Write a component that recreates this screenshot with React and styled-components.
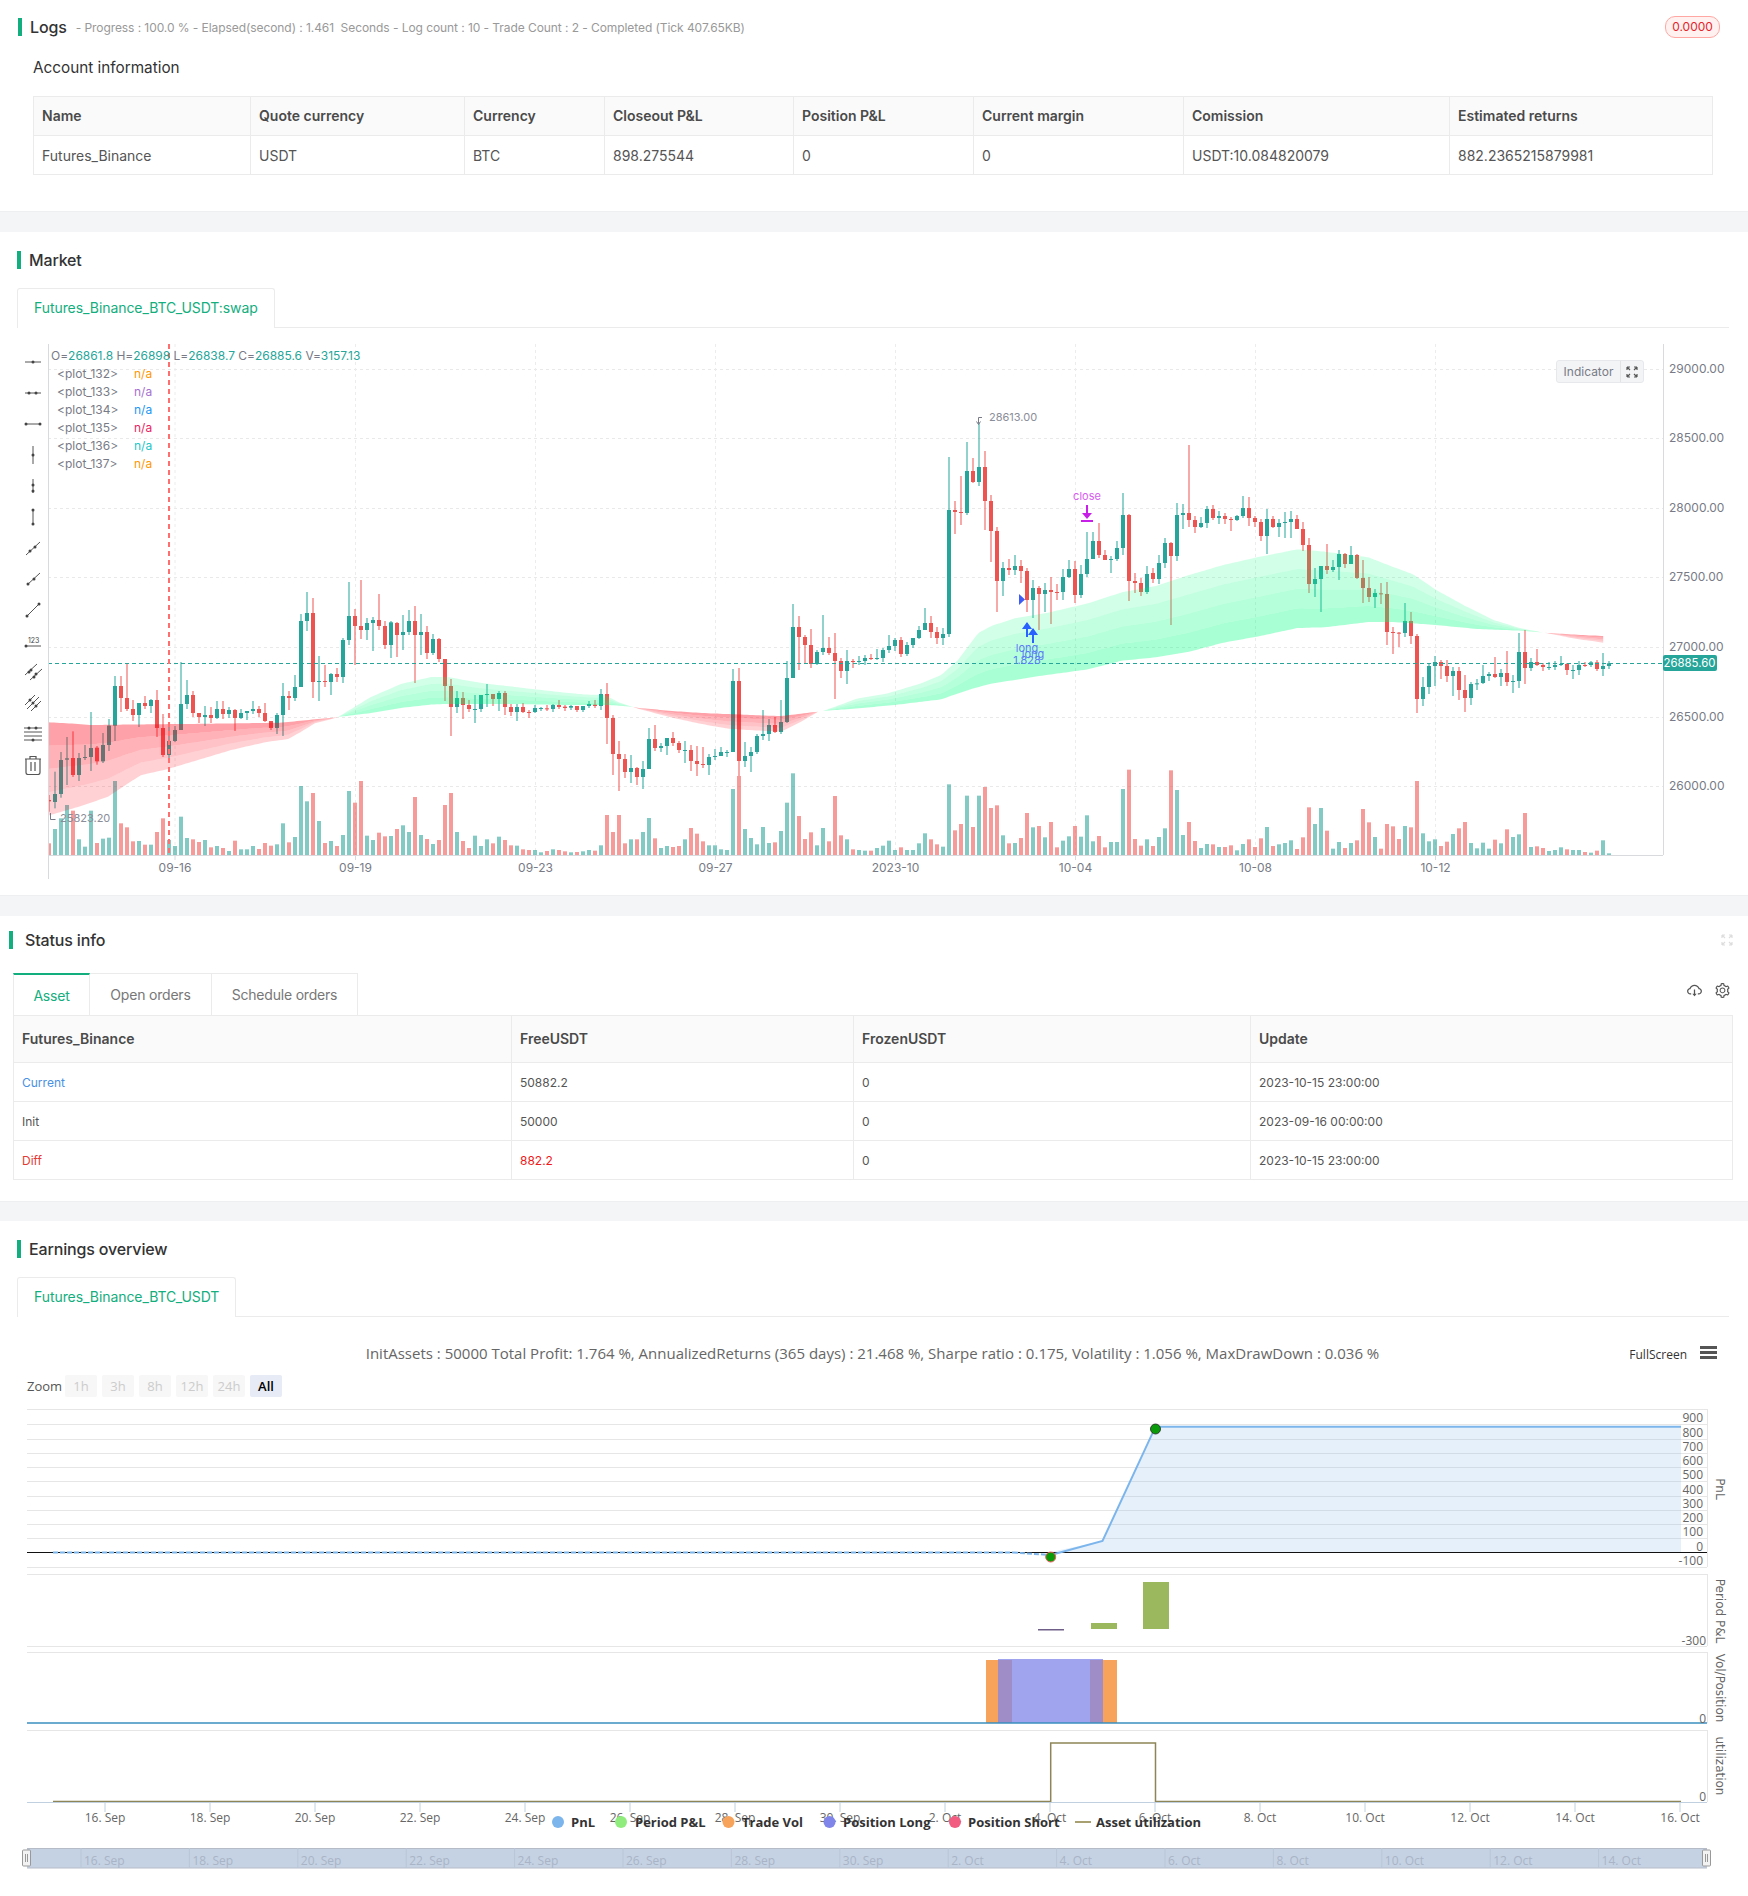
import React from 'react';
import styled, { createGlobalStyle } from 'styled-components';
import { AiOutlineCloudDownload, AiOutlineSetting } from 'react-icons/ai';

const colors = {
    green: '#26a69a',
    red: '#ef5350',
    accent: '#12ae7e',
    border: '#ebebeb',
    band: '#f4f5f7',
    axis: '#787b86',
};

const Global = createGlobalStyle`
    html, body { margin: 0; padding: 0; background: #fff; }
    #root { width: 1748px; height: 1896px; overflow: hidden; }
    * { box-sizing: border-box; }
    body { font-family: Inter, "Liberation Sans", sans-serif; color: #333; }
`;

const Section = styled.section`
    position: relative;
    height: ${(p) => p.$h}px;
    padding-top: ${(p) => p.$top}px;
    background: #fff;
`;

const Gap = styled.div`
    height: ${(p) => p.$h}px;
    background: ${colors.band};
    border-top: 1px solid #eeeff1;
`;

const Heading = styled.div`
    display: flex;
    align-items: center;
    height: 18px;
    margin-left: ${(p) => p.$left}px;
    padding-right: 28px;
`;

const Bar = styled.span`
    width: 4px;
    height: 18px;
    background: ${colors.accent};
    margin-right: ${(p) => p.$gap || 8}px;
`;

const Title = styled.h2`
    margin: 0;
    font-size: 16px;
    line-height: 18px;
    font-weight: 500;
    letter-spacing: -0.15px;
    color: #333;
`;

const Progress = styled.span`
    margin-left: 9px;
    font-size: 12px;
    letter-spacing: -0.07px;
    color: #999;
    white-space: pre;
`;

const Badge = styled.span`
    margin-left: auto;
    width: 55px;
    height: 22px;
    line-height: 20px;
    text-align: center;
    font-size: 12px;
    color: #e5242a;
    background: #fff1f0;
    border: 1px solid #ffa8a3;
    border-radius: 10px;
`;

const SubTitle = styled.h3`
    margin: 23px 0 19px 33px;
    font-size: 15.3px;
    line-height: 18px;
    font-weight: 400;
    color: #333;
`;

const Table = styled.table`
    table-layout: fixed;
    border-collapse: collapse;
    width: ${(p) => p.$w}px;
    margin-left: ${(p) => p.$left}px;
`;

const Th = styled.th`
    width: ${(p) => p.$w}px;
    height: ${(p) => p.$h}px;
    padding: 0 8px 1px;
    text-align: left;
    font-size: 14px;
    font-weight: 600;
    color: #4a4a4a;
    background: #fafafa;
    border: 1px solid ${colors.border};
`;

const Td = styled.td`
    height: ${(p) => p.$h}px;
    padding: 0 8px;
    font-size: ${(p) => p.$size}px;
    color: ${(p) => p.$color || '#555'};
    border: 1px solid ${colors.border};
`;

const TabBar = styled.div`
    display: flex;
    height: 40px;
    margin: 19px 19px 0 17px;
    border-bottom: 1px solid ${colors.border};
`;

const Tab = styled.div`
    height: 40px;
    padding: 0 16px;
    line-height: 38px;
    font-size: 14px;
    letter-spacing: -0.07px;
    color: ${colors.accent};
    background: #fff;
    border: 1px solid ${colors.border};
    border-bottom: 0;
    border-radius: 3px 3px 0 0;
`;

const ChartRow = styled.div`
    display: flex;
    position: relative;
    height: 555px;
    margin-top: 12px;
`;

const Toolbar = styled.div`
    flex: 0 0 48px;
    display: flex;
    flex-direction: column;
    align-items: center;
    padding: 6px 0 0 18px;
`;

const ToolItem = styled.div`
    flex: 0 0 31px;
    width: 30px;
    display: flex;
    align-items: center;
    justify-content: center;
`;

const Canvas = styled.svg`
    display: block;
    flex: 0 0 auto;
`;

const Ohlc = styled.div`
    position: absolute;
    left: 51px;
    top: 8px;
    font-size: 12px;
    line-height: 16px;
    letter-spacing: -0.02px;
    color: ${colors.axis};
    white-space: pre;
`;

const OhlcValue = styled.span`
    color: ${colors.green};
`;

const PlotList = styled.div`
    position: absolute;
    left: 57px;
    top: 25px;
    display: flex;
    flex-direction: column;
`;

const PlotRow = styled.div`
    display: flex;
    height: 18px;
    line-height: 18px;
    font-size: 12px;
    color: ${colors.axis};
`;

const PlotName = styled.span`
    width: 77px;
`;

const PlotValue = styled.span`
    color: ${(p) => p.$color};
`;

const IndicatorBox = styled.div`
    position: absolute;
    left: 1556px;
    top: 20px;
    width: 88px;
    height: 23px;
    display: flex;
    align-items: center;
    font-size: 12px;
    color: #787b86;
    background: #f3f4f6;
    border: 1px solid #e6e8eb;
    border-radius: 3px;
`;

const IndicatorLabel = styled.span`
    flex: 0 0 64px;
    text-align: center;
    border-right: 1px solid #e1e3e6;
    line-height: 21px;
`;

const IndicatorIcon = styled.span`
    flex: 1;
    display: flex;
    justify-content: center;
`;

const ExpandWrap = styled.span`
    margin-left: auto;
    margin-right: -13px;
    display: flex;
`;

const TabsRow = styled.div`
    display: flex;
    align-items: flex-start;
    height: 42px;
    margin: 24px 17px 0 13px;
`;

const StatusTab = styled.div`
    width: ${(p) => p.$w}px;
    height: 42px;
    line-height: 42px;
    text-align: center;
    font-size: 14px;
    letter-spacing: -0.2px;
    color: ${(p) => (p.$active ? colors.accent : '#777')};
    border: 1px solid ${colors.border};
    border-left-width: ${(p) => (p.$first ? 1 : 0)}px;
    border-bottom: 0;
    border-top: ${(p) => (p.$active ? `2px solid ${colors.accent}` : `1px solid ${colors.border}`)};
`;

const TabTools = styled.div`
    margin-left: auto;
    display: flex;
    gap: 11px;
    padding-top: 9px;
    color: #555;
    font-size: 17px;
`;

const StatsRow = styled.div`
    display: grid;
    grid-template-columns: 1fr auto 1fr;
    align-items: center;
    height: 30px;
    margin-top: 21px;
    padding: 0 31px 0 28px;
`;

const Stats = styled.div`
    grid-column: 2;
    font-family: "Open Sans", sans-serif;
    font-size: 15px;
    color: #666;
    white-space: nowrap;
`;

const FullScreen = styled.div`
    grid-column: 3;
    justify-self: end;
    display: flex;
    align-items: center;
    gap: 13px;
    margin-top: 3px;
    font-family: "Open Sans", sans-serif;
    font-size: 12px;
    color: #333;
`;

const Burger = styled.span`
    display: flex;
    flex-direction: column;
    justify-content: space-between;
    width: 17px;
    height: 13px;
    margin-top: -4px;
`;

const BurgerLine = styled.i`
    display: block;
    height: 3px;
    background: #555;
`;

const ZoomRow = styled.div`
    display: flex;
    align-items: center;
    gap: 5px;
    height: 22px;
    margin: 7px 0 3px;
    padding-left: 27px;
    font-family: "Open Sans", sans-serif;
    font-size: 13px;
`;

const ZoomLabel = styled.span`
    width: 33px;
    color: #555;
`;

const ZoomButton = styled.span`
    width: 32px;
    height: 22px;
    line-height: 22px;
    text-align: center;
    border-radius: 2px;
    background: ${(p) => (p.$active ? '#e6ebf5' : '#f7f7f7')};
    color: ${(p) => (p.$active ? '#000' : '#ccc')};
    font-weight: ${(p) => (p.$active ? 600 : 400)};
`;

const AxisText = styled.text`
    font-family: Inter, sans-serif;
    font-size: 12px;
    fill: ${colors.axis};
`;

const PriceTag = styled.text`
    font-family: Inter, sans-serif;
    font-size: 11.4px;
    fill: #fff;
    text-anchor: middle;
`;

const NoteText = styled.text`
    font-family: Inter, sans-serif;
    font-size: 11px;
    fill: ${(p) => p.$color};
    text-anchor: ${(p) => p.$anchor || 'start'};
`;

const HcText = styled.text`
    font-family: "Open Sans", sans-serif;
    font-size: 12px;
    fill: #666;
    text-anchor: ${(p) => p.$anchor || 'middle'};
`;

const HcTitle = styled.text`
    font-family: "DejaVu Sans", sans-serif;
    font-size: 12px;
    fill: #666;
    text-anchor: middle;
`;

const LegendText = styled.text`
    font-family: "Open Sans", sans-serif;
    font-size: 13px;
    font-weight: 700;
    fill: #333;
`;

const NavText = styled.text`
    font-family: "Open Sans", sans-serif;
    font-size: 12px;
    fill: #a9b4c6;
`;

// candles read off the chart: colour + high, body top, body bottom, low, volume top
const candleRows = [
    [560, `r705,720,724,755,850 g635,702,726,745,807 g576,600,702,713,775 g531,595,599,675,735 r514,594,645,651,752 g579,594,645,663,838 g555,591,594,600,860 g456,564,591,633,752 r558,563,604,614,849 g519,555,604,609,836 g477,497,555,573,833 g348,378,497,543,663 r348,378,414,456,790 r312,414,447,453,802 r420,447,465,483,844 g429,429,465,501,843 r408,429,438,447,854 g417,420,438,459,854 r390,420,504,531,816 r462,504,585,591,775 g498,543,585,597,840 g498,510,543,546,858 g306,432,510,510,770 g360,405,432,447,834 r393,405,459,471,838 r459,459,471,489,846 g438,465,471,498,840 r441,465,474,489,862 g423,447,474,477,858 r423,447,462,477,864 g441,450,462,474,873 r447,450,474,513,842 g447,459,474,477,868 g453,453,459,480,868 g423,447,453,462,858 r438,447,459,471,867 r429,459,483,486,849 r483,483,504,510,857 g459,465,504,522,853 g369,408,465,528,790 r393,408,414,450,847 g345,381,414,423,831 g162,183,381,381,678 g96,159,183,213,724 r114,159,366,414,699 g288,363,366,423,783 r315,363,366,381,849 g339,342,366,405,843 r324,342,351,366,858 g234,240,351,369,825 g66,168,240,255,693 r147,168,198,315,728 r60,198,210,237,663 g174,189,210,240,827 g171,180,189,273,840 r102,180,198,210,818 r183,198,255,267,829 g183,187,255,294,828 r186,189,225,291,807 g165,216,225,270,796 g150,183,216,225,816 r138,183,225,369,711 g162,216,225,285,825 r198,216,279,297,837 g222,237,279,285,852 r234,237,297,306,840 r297,297,378,423,735 r357,378,441,528,699 g393,414,441,459,816 r396,414,435,477,843 r420,435,447,456,864 g405,447,450,489,827 g405,405,447,456,858 g372,402,405,441,838 r402,402,417,438,850 g393,399,417,453,830 r393,399,441,465,840 r432,441,456,468,856 g432,441,456,483,857 r429,441,456,459,868 r450,456,459,474,870 g435,444,456,459,870 g441,444,447,453,877 r435,445,447,453,873 g432,435,447,456,868 r420,435,441,447,870 r435,440,444,453,874`],
    [420, `g855,858,863,870,1297 r858,858,870,876,1296 g858,858,870,876,1294 g843,852,858,864,1290 r840,854,858,864,1292 g807,822,858,870,1276 r789,822,894,972,1185 r885,894,1002,1065,1236 r963,1002,1017,1113,1185 r1002,1017,1056,1074,1270 g1005,1044,1056,1089,1258 r1041,1044,1071,1095,1258 g1023,1047,1071,1107,1236 g924,957,1047,1047,1194 r915,957,984,993,1255 g969,978,984,996,1284 g954,954,978,1005,1278 r936,954,969,978,1281 r963,969,990,999,1278 g963,990,993,1029,1258 r975,990,1023,1053,1224 r978,1023,1032,1068,1241 r981,1032,1035,1044,1264 g1002,1011,1035,1065,1276 g987,1008,1011,1020,1276 g981,996,1008,1008,1288 g990,996,997,1011,1290 g747,783,996,996,1107 r744,783,1023,1068,1068 g966,1008,1023,1041,1227 g981,996,1008,1056,1254 g942,948,996,1002,1273 g870,942,948,960,1221 g897,915,942,963,1269 r891,915,936,939,1267 g840,906,936,942,1233 g723,774,906,909,1148 g552,621,774,774,1060 r588,621,651,750,1188 r645,651,675,732,1257 r627,675,732,744,1237 g690,696,732,735,1276 g585,684,696,705,1224 r651,684,699,705,1264 r639,699,723,837,1128 r714,723,753,774,1246 g690,723,753,792,1258 r717,723,726,744,1288 g708,723,726,735,1290 g705,714,723,735,1292 r702,714,717,720,1292 g687,714,716,720,1284 g684,690,714,726,1277 g645,678,690,699,1262 g654,660,678,693,1290 r651,660,702,711,1282 g666,675,702,708,1290 g654,654,675,684,1290 g618,630,654,657,1270 g564,609,630,630,1240 r588,609,636,654,1258 r621,636,654,672,1273 g624,642,654,675,1280 g111,270,642,651,1093 r243,270,276,342,1231 r168,276,279,315,1212 g66,153,279,285,1127 r114,153,186,189,1221 g8,141,186,198,1127 r93,141,243,330,1101 r225,243,333,426,1164 r321,333,483,576,1156 g426,444,483,528,1246 r417,444,450,465,1270 g405,438,450,465,1269 r420,438,453,489,1254 r444,453,540,576,1179 g480,504,540,594,1222 r498,504,522,630,1218 g489,510,522,576,1252 r471,510,516,612,1206 r492,516,519,540,1282 g447,471,516,540,1262 g420,447,471,474,1249 r423,447,525,549,1218 g435,462,525,534,1250 g336,417,462,471,1186`],
    [420, `g336,363,417,417,1264 r309,363,405,414,1248 r390,405,420,420,1282 g408,417,419,459,1266 g363,384,417,423,1266 g219,285,384,405,1107 r282,285,483,543,1049 r459,483,489,519,1257 r474,489,516,528,1277 g438,462,516,522,1258 r444,459,477,489,1278 g405,429,477,492,1251 g354,369,429,444,1225 r366,369,408,615,1051 g249,285,408,423,1110 g252,279,285,327,1245 r75,279,300,321,1206 r288,300,321,339,1263 g291,309,321,324,1284 g258,267,309,324,1272 r255,267,294,300,1273 g273,288,294,312,1281 r279,288,297,312,1281 r291,297,299,333,1276 g285,288,300,303,1291 g228,264,288,294,1272 r231,264,294,318,1258 r288,294,306,321,1281 r297,306,348,363,1255 g267,297,348,402,1221 r288,297,321,324,1278 g297,309,321,351,1273 g276,306,308,354,1269 g273,297,306,354,1261 r285,297,327,327,1287 r306,327,375,393,1252 r354,375,492,519,1162 g444,477,492,531,1212 g438,438,477,576,1164 r372,438,450,462,1232 g420,441,450,456,1286 g390,402,441,480,1266 r399,402,432,444,1284 g378,405,432,432,1269 r402,405,474,477,1261 r420,474,504,549,1167 r471,504,531,546,1207 g507,519,531,564,1251 r489,520,522,552,1286 r486,522,636,675,1212 r621,636,638,702,1219 r636,638,640,681,1257 g549,603,639,651,1218 r576,603,648,672,1222 r642,648,837,879,1083 g771,801,837,858,1240 g732,738,801,822,1264 g708,726,738,798,1258 r720,726,738,777,1278 r720,738,768,786,1265 g741,753,768,828,1242 r741,753,810,840,1225 r765,810,834,876,1206 g786,792,834,855,1269 g777,790,792,810,1285 g735,768,789,792,1268 g756,762,768,783,1286 r711,762,771,774,1259 g747,759,771,798,1270 r693,759,786,798,1228 g765,783,785,819,1251 g639,696,783,804,1243 r630,696,744,792,1179 g714,726,744,753,1281 r687,726,735,738,1279 r729,735,741,753,1284 g726,741,743,750,1293 g723,735,741,750,1290 g708,732,735,738,1282 r729,732,750,765,1288 g735,750,752,777,1290 g723,735,750,765,1290 r726,735,738,741,1296 g723,727,735,741,1298 r720,727,747,753,1292 g699,738,747,768,1261 g723,730,738,747,1300`],
];

const candles = candleRows.flatMap(([y0, text]) =>
    text.split(' ').map((item) => {
        const [high, top, bottom, low, vol] = item.slice(1).split(',').map((n) => y0 + Number(n) / 3);
        return { up: item[0] === 'g', high, top, bottom, low, vol };
    })
);

const fromCrop = (x0, y0, sx, pts) => pts.map(([x, y]) => [x0 + x / sx, y0 + y / 3]);

const interp = (edge, x) => {
    for (let i = 1; i < edge.length; i++) {
        if (x <= edge[i][0]) {
            const [x1, y1] = edge[i - 1];
            const [x2, y2] = edge[i];
            return y1 + ((y2 - y1) * (x - x1)) / (x2 - x1 || 1);
        }
    }
    return edge[edge.length - 1][1];
};

const greenFill = ['rgba(0,255,128,.18)', 'rgba(0,255,128,.24)', 'rgba(0,255,128,.29)', 'rgba(0,255,128,.34)'];
const redFill = ['rgba(255,0,20,.37)', 'rgba(255,0,20,.3)', 'rgba(255,0,20,.24)', 'rgba(255,0,20,.18)'];
const steps = [0, 0.25, 0.5, 0.75, 1];

const ribbons = [
    {
        fills: redFill,
        top: fromCrop(48, 560, 3, [[0, 487], [60, 490], [130, 495], [300, 493], [500, 491], [700, 488], [800, 478], [870, 472]]),
        bottom: fromCrop(48, 560, 3, [[0, 767], [100, 738], [180, 710], [240, 670], [280, 645], [360, 627], [450, 600], [550, 570], [650, 547], [720, 537], [760, 515], [800, 490], [870, 472]]),
    },
    {
        fills: greenFill,
        top: [[338, 717], [371, 697], [401, 684], [431, 677], [448, 677], [481, 683], [515, 687], [568, 693], [588, 694.7], [605, 695], [618, 702], [633, 707]],
        bottom: [[338, 717], [371, 713], [401, 708], [431, 704.5], [448, 704], [481, 704], [515, 704], [568, 705], [588, 705], [605, 705], [618, 705.5], [633, 707]],
    },
    {
        fills: redFill,
        top: fromCrop(568, 420, 3, [[195, 862], [300, 872], [400, 879], [500, 883], [600, 887], [640, 888], [750, 875]]),
        bottom: fromCrop(568, 420, 3, [[195, 862], [300, 890], [400, 912], [480, 926], [560, 931], [640, 935], [700, 905], [750, 875]]),
    },
    {
        fills: greenFill,
        top: [
            ...fromCrop(568, 420, 3, [[765, 873], [870, 835], [960, 820], [1060, 790], [1120, 765], [1170, 720], [1230, 640], [1270, 618], [1340, 595], [1440, 578]]),
            ...fromCrop(1088, 420, 2.958, [[0, 550], [30, 540], [100, 517], [200, 498], [300, 465], [400, 435], [500, 412], [620, 388], [700, 395], [830, 412], [900, 440], [960, 462], [1030, 510], [1110, 555], [1200, 600], [1280, 625], [1350, 638]]),
        ],
        bottom: [
            ...fromCrop(568, 420, 3, [[765, 873], [870, 865], [980, 855], [1120, 838], [1200, 810], [1265, 792], [1400, 770]]),
            ...fromCrop(1088, 420, 2.958, [[0, 748], [100, 722], [200, 712], [300, 695], [400, 668], [500, 650], [620, 624], [700, 622], [830, 606], [900, 606], [960, 610], [1030, 615], [1150, 627], [1280, 632], [1350, 638]]),
        ],
    },
    {
        fills: redFill,
        top: fromCrop(1088, 420, 2.958, [[1350, 638], [1440, 644], [1524, 648]]),
        bottom: fromCrop(1088, 420, 2.958, [[1350, 638], [1440, 656], [1524, 668]]),
    },
];

const ribbonLayers = (ribbon) => {
    const start = ribbon.top[0][0];
    const end = ribbon.top[ribbon.top.length - 1][0];
    const xs = [];
    for (let x = start; x < end; x += 3) xs.push(x);
    xs.push(end);
    const lineAt = (f) => xs.map((x) => [x, interp(ribbon.top, x) * (1 - f) + interp(ribbon.bottom, x) * f]);
    return ribbon.fills.map((fill, i) => {
        const upper = lineAt(steps[i]);
        const lower = lineAt(steps[i + 1]).reverse();
        return { fill, points: [...upper, ...lower].map(([x, y]) => `${x.toFixed(1)},${y.toFixed(1)}`).join(' ') };
    });
};

const priceTicks = [
    ['29000.00', 369], ['28500.00', 438], ['28000.00', 508], ['27500.00', 577],
    ['27000.00', 647], ['26500.00', 717], ['26000.00', 786],
];
const timeTicks = [
    ['09-16', 175], ['09-19', 355.5], ['09-23', 535.5], ['09-27', 715.5],
    ['2023-10', 895.5], ['10-04', 1075.5], ['10-08', 1255.5], ['10-12', 1435.5],
];

const MarketChart = () => (
    <Canvas width="1700" height="555" viewBox="48 340 1700 555">
        {priceTicks.map(([label, y]) => (
            <line key={label} x1="48" x2="1663" y1={y + 0.5} y2={y + 0.5} stroke="#e9e9e9" strokeDasharray="3 3" />
        ))}
        {timeTicks.map(([label, x]) => (
            <line key={label} x1={x} x2={x} y1="344" y2="855" stroke="#ececec" strokeDasharray="3 3" />
        ))}
        {candles.map((c, i) => {
            const x = 49 + 6 * i;
            return (
                <rect key={i} x={x - 2} y={c.vol} width="4" height={855 - c.vol} fill={c.up ? colors.green : colors.red} opacity="0.58" />
            );
        })}
        {candles.map((c, i) => {
            const x = 49 + 6 * i;
            const fill = c.up ? colors.green : colors.red;
            return (
                <g key={i} fill={fill}>
                    <rect x={x - 1} y={c.high} width="2" height={c.low - c.high} opacity="0.5" />
                    <rect x={x - 2} y={c.top} width="4" height={Math.max(c.bottom - c.top, 1)} />
                </g>
            );
        })}
        {ribbons.flatMap((ribbon, r) =>
            ribbonLayers(ribbon).map((layer, i) => <polygon key={`${r}-${i}`} points={layer.points} fill={layer.fill} />)
        )}
        <line x1="48" x2="1663" y1="663.5" y2="663.5" stroke={colors.green} strokeDasharray="4 3" />
        <line x1="169" x2="169" y1="344" y2="855" stroke="#ff6f6f" strokeWidth="2" strokeDasharray="5 4" />
        <line x1="48.5" x2="48.5" y1="344" y2="879" stroke="#d8dade" />
        <line x1="1663.5" x2="1663.5" y1="344" y2="855" stroke="#d8dade" />
        <line x1="48" x2="1663" y1="855.5" y2="855.5" stroke="#d8dade" />
        {timeTicks.map(([label, x]) => (
            <g key={label}>
                <line x1={x} x2={x} y1="855" y2="860" stroke="#d8dade" />
                <AxisText x={x} y="872" textAnchor="middle">{label}</AxisText>
            </g>
        ))}
        {priceTicks.map(([label, y]) => (
            <AxisText key={label} x="1669" y={y + 4}>{label}</AxisText>
        ))}
        <rect x="1663" y="655" width="54" height="16" rx="2" fill={colors.green} />
        <PriceTag x="1689.5" y="667">26885.60</PriceTag>

        <path d="M982 417.5h-3.5v6M976.5 421.5l2 3 2-3" fill="none" stroke="#787b86" />
        <NoteText x="989" y="421" $color="#8a8e99">28613.00</NoteText>
        <path d="M50.5 813v6.5h5" fill="none" stroke="#787b86" />
        <NoteText x="60" y="822" $color="#8a8e99">25823.20</NoteText>

        <NoteText x="1087" y="500" $color="#d65cf0" $anchor="middle">close</NoteText>
        <path d="M1087 505v12" stroke="#c81fe8" strokeWidth="2" />
        <path d="M1082 513l5 6 5-6z" fill="#c81fe8" />
        <rect x="1081" y="520" width="12" height="2" fill="#c81fe8" />

        <path d="M1019 594l6 5.5-6 5.5z" fill="#3d5cf5" />
        <path d="M1027 623v14" stroke="#2962ff" strokeWidth="2" />
        <path d="M1022 629l5-7 5 7z" fill="#2962ff" />
        <path d="M1033 629v14" stroke="#2962ff" strokeWidth="2" />
        <path d="M1028 635l5-7 5 7z" fill="#2962ff" />
        <NoteText x="1027" y="652" $color="#5b7cf5" $anchor="middle">long</NoteText>
        <NoteText x="1033" y="658" $color="#5b7cf5" $anchor="middle">long</NoteText>
        <NoteText x="1027" y="664" $color="#5b7cf5" $anchor="middle">1.828</NoteText>
    </Canvas>
);

const Dot = ({ x, y }) => <circle cx={x} cy={y} r="1.5" fill="#444" stroke="none" />;

const toolIcons = [
    <><path d="M1 9h16" /><Dot x={9} y={9} /></>,
    <><path d="M1 9h16" /><Dot x={5} y={9} /><Dot x={12} y={9} /></>,
    <><path d="M2 9h14" /><Dot x={2} y={9} /><Dot x={16} y={9} /></>,
    <><path d="M9 0v18" /><Dot x={9} y={9} /></>,
    <><path d="M9 2v14" /><Dot x={9} y={8} /><Dot x={9} y={14} /></>,
    <><path d="M9 2v14" /><Dot x={9} y={2} /><Dot x={9} y={16} /></>,
    <><path d="M2 16L16 3" /><Dot x={6} y={12} /><Dot x={11} y={8} /></>,
    <><path d="M3 15L16 3" /><Dot x={4} y={14} /><Dot x={10} y={9} /></>,
    <><path d="M3 15L15 3" /><Dot x={3} y={15} /><Dot x={15} y={3} /></>,
    <><path d="M2 14h15" /><Dot x={2} y={14} /><text x="4" y="11" fontSize="7" stroke="none" fill="#444" fontFamily="Inter">123</text></>,
    <><path d="M1 12L13 1M6 17L18 6" /><Dot x={7} y={7} /><Dot x={12} y={11} /><Dot x={5} y={9} /><Dot x={10} y={14} /></>,
    <><path d="M1 11L11 1M3 15L15 3M7 17L17 7" /><Dot x={6} y={6} /><Dot x={9} y={9} /><Dot x={12} y={12} /></>,
    <><path d="M0 3h18M0 7h18M0 11h18M0 15h18" /><Dot x={5} y={3} /><Dot x={12} y={3} /><Dot x={9} y={15} /></>,
    <><path d="M1 3h16M6 3V0.5h6V3M2 3v13.5a2 2 0 0 0 2 2h10a2 2 0 0 0 2-2V3M7 6v9M11 6v9" strokeWidth="1.2" /></>,
];

const ExpandIcon = ({ color }) => (
    <svg width="12" height="12" viewBox="0 0 12 12" fill="none" stroke={color} strokeWidth="1.2">
        <path d="M1 1l3 3M1 1v3M1 1h3M11 1L8 4M11 1v3M11 1H8M1 11l3-3M1 11V8M1 11h3M11 11L8 8M11 11V8M11 11H8" />
    </svg>
);

const plots = [
    ['132', '#ff9800'], ['133', '#a66fd0'], ['134', '#2196f3'],
    ['135', '#e91e63'], ['136', '#26c6c6'], ['137', '#ff9800'],
];

const days = ['16. Sep', '18. Sep', '20. Sep', '22. Sep', '24. Sep', '26. Sep', '28. Sep', '30. Sep', '2. Oct', '4. Oct', '6. Oct', '8. Oct', '10. Oct', '12. Oct', '14. Oct', '16. Oct'];
const pnlTicks = [
    ['900', 1409, 1422], ['800', 1424, 1437], ['700', 1439, 1451], ['600', 1453, 1465], ['500', 1467, 1479],
    ['400', 1481, 1494], ['300', 1496, 1508], ['200', 1510, 1522], ['100', 1524, 1536], ['0', 1538, 1551], ['-100', 1567, 1565],
];

const legendItems = [
    ['PnL', 558, 571, '#7cb5ec'], ['Period P&L', 621, 635, '#90ed7d'], ['Trade Vol', 728.5, 742, '#f7a35c'],
    ['Position Long', 829.5, 843, '#8085e9'], ['Position Short', 955, 968, '#f15c80'],
];

const hline = (y, x1 = 27, x2 = 1707, stroke = '#e6e6e6') => (
    <line key={`${y}-${x1}`} x1={x1} x2={x2} y1={y + 0.5} y2={y + 0.5} stroke={stroke} />
);

const EarningsChart = () => (
    <Canvas width="1748" height="496" viewBox="0 1400 1748 496">
        {pnlTicks.map(([, y]) => hline(y))}
        {[1574, 1646, 1652, 1730].map((y) => hline(y))}
        {[[1409, 1567], [1574, 1646], [1652, 1723], [1730, 1802]].map(([a, b]) => (
            <line key={a} x1="1707.5" x2="1707.5" y1={a} y2={b} stroke="#e6e6e6" />
        ))}

        <polygon points="1050.7,1552 1102.5,1541 1155.5,1426.7 1681,1426.7 1681,1552" fill="rgba(124,181,236,.2)" />
        <line x1="27" x2="1707" y1="1552.5" y2="1552.5" stroke="#111" strokeWidth="1.2" />
        <line x1="53" x2="1013" y1="1552.5" y2="1552.5" stroke="#7cb5ec" strokeWidth="2" strokeDasharray="5 2" />
        <path d="M1013 1552.5L1050.7 1555" fill="none" stroke="#7cb5ec" strokeWidth="2" strokeDasharray="5 2" />
        <path d="M1050.7 1555L1102.5 1541L1155.5 1426.7H1681" fill="none" stroke="#7cb5ec" strokeWidth="2" />
        <circle cx="1050.7" cy="1557" r="5" fill="#0a9b0a" stroke="#f15c5c" />
        <circle cx="1155.5" cy="1429" r="5" fill="#0a9b0a" stroke="#222" strokeWidth="0.8" />
        {pnlTicks.map(([label, , y]) => (
            <HcText key={label} x="1703" y={y} $anchor="end">{label}</HcText>
        ))}

        <rect x="1091" y="1623" width="26" height="6" fill="#9bb85f" />
        <rect x="1143" y="1582" width="26" height="47" fill="#9bb85f" />
        <rect x="1038" y="1629" width="26" height="1.5" fill="#6f5e88" />
        <HcText x="1706" y="1645" $anchor="end">-300</HcText>

        <rect x="986" y="1660" width="26" height="63" fill="#f7a35c" />
        <rect x="1090" y="1660" width="27" height="63" fill="#f7a35c" />
        <rect x="998" y="1659" width="105" height="64" fill="rgba(128,133,233,.75)" />
        <line x1="27" x2="1707" y1="1723" y2="1723" stroke="#3a8fbf" strokeWidth="1.5" />
        <HcText x="1706" y="1723" $anchor="end">0</HcText>

        <path d="M53 1801.5H1050.7V1743H1155.5V1801.5H1681" fill="none" stroke="#8d8557" strokeWidth="1.5" />
        <HcText x="1706" y="1801" $anchor="end">0</HcText>

        <line x1="27" x2="1707" y1="1802.5" y2="1802.5" stroke="#c0d0e0" />
        {days.map((label, i) => {
            const x = 105 + 105 * i;
            return (
                <g key={label}>
                    <line x1={x} x2={x} y1="1802" y2="1812" stroke="#c0d0e0" />
                    <HcText x={x} y="1822">{label}</HcText>
                </g>
            );
        })}

        <HcTitle transform="rotate(90 1716 1489)" x="1716" y="1489">PnL</HcTitle>
        <HcTitle transform="rotate(90 1716 1611)" x="1716" y="1611">Period P&amp;L</HcTitle>
        <HcTitle transform="rotate(90 1716 1688)" x="1716" y="1688">Vol/Position</HcTitle>
        <HcTitle transform="rotate(90 1716 1766)" x="1716" y="1766">utilization</HcTitle>

        {legendItems.map(([label, dot, x, color]) => (
            <g key={label}>
                <circle cx={dot} cy="1822" r="6" fill={color} />
                <LegendText x={x} y="1827">{label}</LegendText>
            </g>
        ))}
        <rect x="1075" y="1821" width="16" height="2" fill="#a8a070" />
        <LegendText x="1096" y="1827">Asset utilization</LegendText>

        <rect x="27" y="1848" width="1680" height="20" fill="#c5d2e3" />
        <line x1="27" x2="1707" y1="1848.5" y2="1848.5" stroke="#b5bcc8" />
        <line x1="27" x2="1707" y1="1868" y2="1868" stroke="#b5bcc8" />
        {days.slice(0, 15).map((label, i) => {
            const x = 81 + 108.4 * i;
            return (
                <g key={label}>
                    <line x1={x} x2={x} y1="1848" y2="1868" stroke="#b9c6d8" />
                    <NavText x={x + 3} y="1865">{label}</NavText>
                </g>
            );
        })}
        {[22.5, 1702.5].map((x) => (
            <g key={x}>
                <rect x={x} y="1850" width="8" height="16" rx="1" fill="#f2f2f2" stroke="#999" />
                <path d={`M${x + 3} 1854v8M${x + 5} 1854v8`} stroke="#999" />
            </g>
        ))}
    </Canvas>
);

const accountCols = [
    ['Name', 217, 'Futures_Binance'], ['Quote currency', 214, 'USDT'], ['Currency', 140, 'BTC'],
    ['Closeout P&L', 189, '898.275544'], ['Position P&L', 180, '0'], ['Current margin', 210, '0'],
    ['Comission', 266, 'USDT:10.084820079'], ['Estimated returns', 263, '882.2365215879981'],
];

const statusCols = [['Futures_Binance', 498], ['FreeUSDT', 342], ['FrozenUSDT', 397], ['Update', 482]];
const statusRows = [
    ['Current', '#4a90e2', '50882.2', '#555', '2023-10-15 23:00:00'],
    ['Init', '#555', '50000', '#555', '2023-09-16 00:00:00'],
    ['Diff', '#e53935', '882.2', '#f01818', '2023-10-15 23:00:00'],
];

const App = () => (
    <>
        <Global />
        <Section $h={211} $top={18}>
            <Heading $left={18}>
                <Bar />
                <Title>Logs</Title>
                <Progress>- Progress : 100.0 % - Elapsed(second) : 1.461  Seconds - Log count : 10 - Trade Count : 2 - Completed (Tick 407.65KB)</Progress>
                <Badge>0.0000</Badge>
            </Heading>
            <SubTitle>Account information</SubTitle>
            <Table $w={1679} $left={33}>
                <thead>
                    <tr>{accountCols.map(([name, w]) => <Th key={name} $w={w} $h={39}>{name}</Th>)}</tr>
                </thead>
                <tbody>
                    <tr>{accountCols.map(([name, , value]) => <Td key={name} $h={39} $size={14}>{value}</Td>)}</tr>
                </tbody>
            </Table>
        </Section>
        <Gap $h={21} />
        <Section $h={663} $top={19}>
            <Heading $left={17}>
                <Bar />
                <Title>Market</Title>
            </Heading>
            <TabBar><Tab>Futures_Binance_BTC_USDT:swap</Tab></TabBar>
            <ChartRow>
                <Toolbar>
                    {toolIcons.map((icon, i) => (
                        <ToolItem key={i}>
                            <svg width="20" height="20" viewBox="-1 -1 20 20" fill="none" stroke="#555" strokeWidth="1">{icon}</svg>
                        </ToolItem>
                    ))}
                </Toolbar>
                <MarketChart />
                <Ohlc>O=<OhlcValue>26861.8</OhlcValue> H=<OhlcValue>26898</OhlcValue> L=<OhlcValue>26838.7</OhlcValue> C=<OhlcValue>26885.6</OhlcValue> V=<OhlcValue>3157.13</OhlcValue></Ohlc>
                <PlotList>
                    {plots.map(([id, color]) => (
                        <PlotRow key={id}>
                            <PlotName>{`<plot_${id}>`}</PlotName>
                            <PlotValue $color={color}>n/a</PlotValue>
                        </PlotRow>
                    ))}
                </PlotList>
                <IndicatorBox>
                    <IndicatorLabel>Indicator</IndicatorLabel>
                    <IndicatorIcon><ExpandIcon color="#555" /></IndicatorIcon>
                </IndicatorBox>
            </ChartRow>
        </Section>
        <Gap $h={21} />
        <Section $h={285} $top={15}>
            <Heading $left={9}>
                <Bar $gap={12} />
                <Title>Status info</Title>
                <ExpandWrap><ExpandIcon color="#ddd" /></ExpandWrap>
            </Heading>
            <TabsRow>
                <StatusTab $active $first $w={77}>Asset</StatusTab>
                <StatusTab $w={122}>Open orders</StatusTab>
                <StatusTab $w={146}>Schedule orders</StatusTab>
                <TabTools>
                    <AiOutlineCloudDownload />
                    <AiOutlineSetting />
                </TabTools>
            </TabsRow>
            <Table $w={1719} $left={13}>
                <thead>
                    <tr>{statusCols.map(([name, w]) => <Th key={name} $w={w} $h={47}>{name}</Th>)}</tr>
                </thead>
                <tbody>
                    {statusRows.map(([name, nameColor, free, freeColor, update]) => (
                        <tr key={name}>
                            <Td $h={39} $size={12} $color={nameColor}>{name}</Td>
                            <Td $h={39} $size={12} $color={freeColor}>{free}</Td>
                            <Td $h={39} $size={12}>0</Td>
                            <Td $h={39} $size={12}>{update}</Td>
                        </tr>
                    ))}
                </tbody>
            </Table>
        </Section>
        <Gap $h={20} />
        <Section $h={675} $top={19}>
            <Heading $left={17}>
                <Bar />
                <Title>Earnings overview</Title>
            </Heading>
            <TabBar><Tab>Futures_Binance_BTC_USDT</Tab></TabBar>
            <StatsRow>
                <Stats>InitAssets : 50000 Total Profit: 1.764 %, AnnualizedReturns (365 days) : 21.468 %, Sharpe ratio : 0.175, Volatility : 1.056 %, MaxDrawDown : 0.036 %</Stats>
                <FullScreen>
                    FullScreen
                    <Burger><BurgerLine /><BurgerLine /><BurgerLine /></Burger>
                </FullScreen>
            </StatsRow>
            <ZoomRow>
                <ZoomLabel>Zoom</ZoomLabel>
                {['1h', '3h', '8h', '12h', '24h'].map((z) => <ZoomButton key={z}>{z}</ZoomButton>)}
                <ZoomButton $active>All</ZoomButton>
            </ZoomRow>
            <EarningsChart />
        </Section>
    </>
);

export default App;
